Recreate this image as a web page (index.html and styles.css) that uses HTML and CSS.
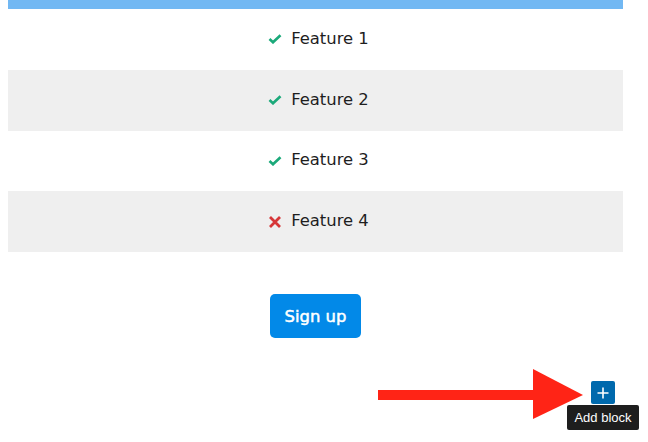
FILE: index.html
```html
<!DOCTYPE html>
<html>
<head>
<meta charset="utf-8">
<link rel="stylesheet" href="styles.css">
</head>
<body>
<div class="page">
  <div class="table">
    <div class="topbar"></div>
    <div class="row">
      <svg class="ico" width="14" height="10" viewBox="0 0 14 10"><path d="M1.5 5 L5 8.3 L12.5 1.2" fill="none" stroke="#1ba97a" stroke-width="2.6"/></svg>
      <span>Feature 1</span>
    </div>
    <div class="row alt">
      <svg class="ico" width="14" height="10" viewBox="0 0 14 10"><path d="M1.5 5 L5 8.3 L12.5 1.2" fill="none" stroke="#1ba97a" stroke-width="2.6"/></svg>
      <span>Feature 2</span>
    </div>
    <div class="row">
      <svg class="ico" width="14" height="10" viewBox="0 0 14 10"><path d="M1.5 5 L5 8.3 L12.5 1.2" fill="none" stroke="#1ba97a" stroke-width="2.6"/></svg>
      <span>Feature 3</span>
    </div>
    <div class="row alt">
      <svg class="ico" width="14" height="12" viewBox="0 0 14 12"><path d="M2 1 L12 11 M12 1 L2 11" fill="none" stroke="#d63638" stroke-width="2.8"/></svg>
      <span>Feature 4</span>
    </div>
  </div>
  <div class="cta">
    <button class="signup">Sign up</button>
  </div>
  <div class="footer">
    <svg class="arrow" width="210" height="52" viewBox="0 0 210 52"><rect x="0" y="21" width="160" height="10" fill="#ff2416"/><polygon points="155,0 205,26 155,50" fill="#ff2416"/></svg>
    <div class="adder">
      <div class="plus"><svg width="12" height="12" viewBox="0 0 12 12"><path d="M6 0.5 V11.5 M0.5 6 H11.5" stroke="#fff" stroke-width="1.6"/></svg></div>
      <div class="tip">Add block</div>
    </div>
  </div>
</div>
</body>
</html>
```
FILE: styles.css
```css
html, body {
  margin: 0;
  padding: 0;
  background: #fff;
}
body {
  font-family: "DejaVu Sans", sans-serif;
  color: #1e1e1e;
}
.page {
  width: 615px;
  margin-left: 8px;
}
.topbar {
  height: 9px;
  background: #72b8f3;
}
.row {
  height: 60.75px;
  display: flex;
  align-items: center;
  justify-content: center;
  gap: 9px;
  font-size: 16.4px;
  padding-left: 6px;
}
.row span {
  position: relative;
  top: -1px;
}
.row.alt {
  background: #efefef;
}
.ico {
  display: block;
}
.cta {
  display: flex;
  justify-content: center;
  padding-top: 42px;
}
.signup {
  width: 91px;
  height: 44px;
  border: none;
  border-radius: 5px;
  background: #0289e8;
  color: #fff;
  font-family: "DejaVu Sans", sans-serif;
  font-size: 16.4px;
  -webkit-text-stroke: 0.5px #fff;
  padding: 0;
}
.footer {
  position: relative;
  height: 100px;
}
.arrow {
  position: absolute;
  left: 370px;
  top: 31px;
}
.adder {
  position: absolute;
  left: 559px;
  top: 43px;
  width: 80px;
}
.plus {
  position: absolute;
  left: 24px;
  top: 0;
  width: 24px;
  height: 23px;
  background: #0069ad;
  border-radius: 2px;
  display: flex;
  align-items: center;
  justify-content: center;
}
.plus svg {
  display: block;
}
.tip {
  position: absolute;
  left: 0;
  top: 24px;
  width: 72px;
  height: 25px;
  background: #1e1e1e;
  border-radius: 2px;
  color: #fff;
  font-family: "Liberation Sans", sans-serif;
  font-size: 13px;
  line-height: 25px;
  text-align: center;
}
```
